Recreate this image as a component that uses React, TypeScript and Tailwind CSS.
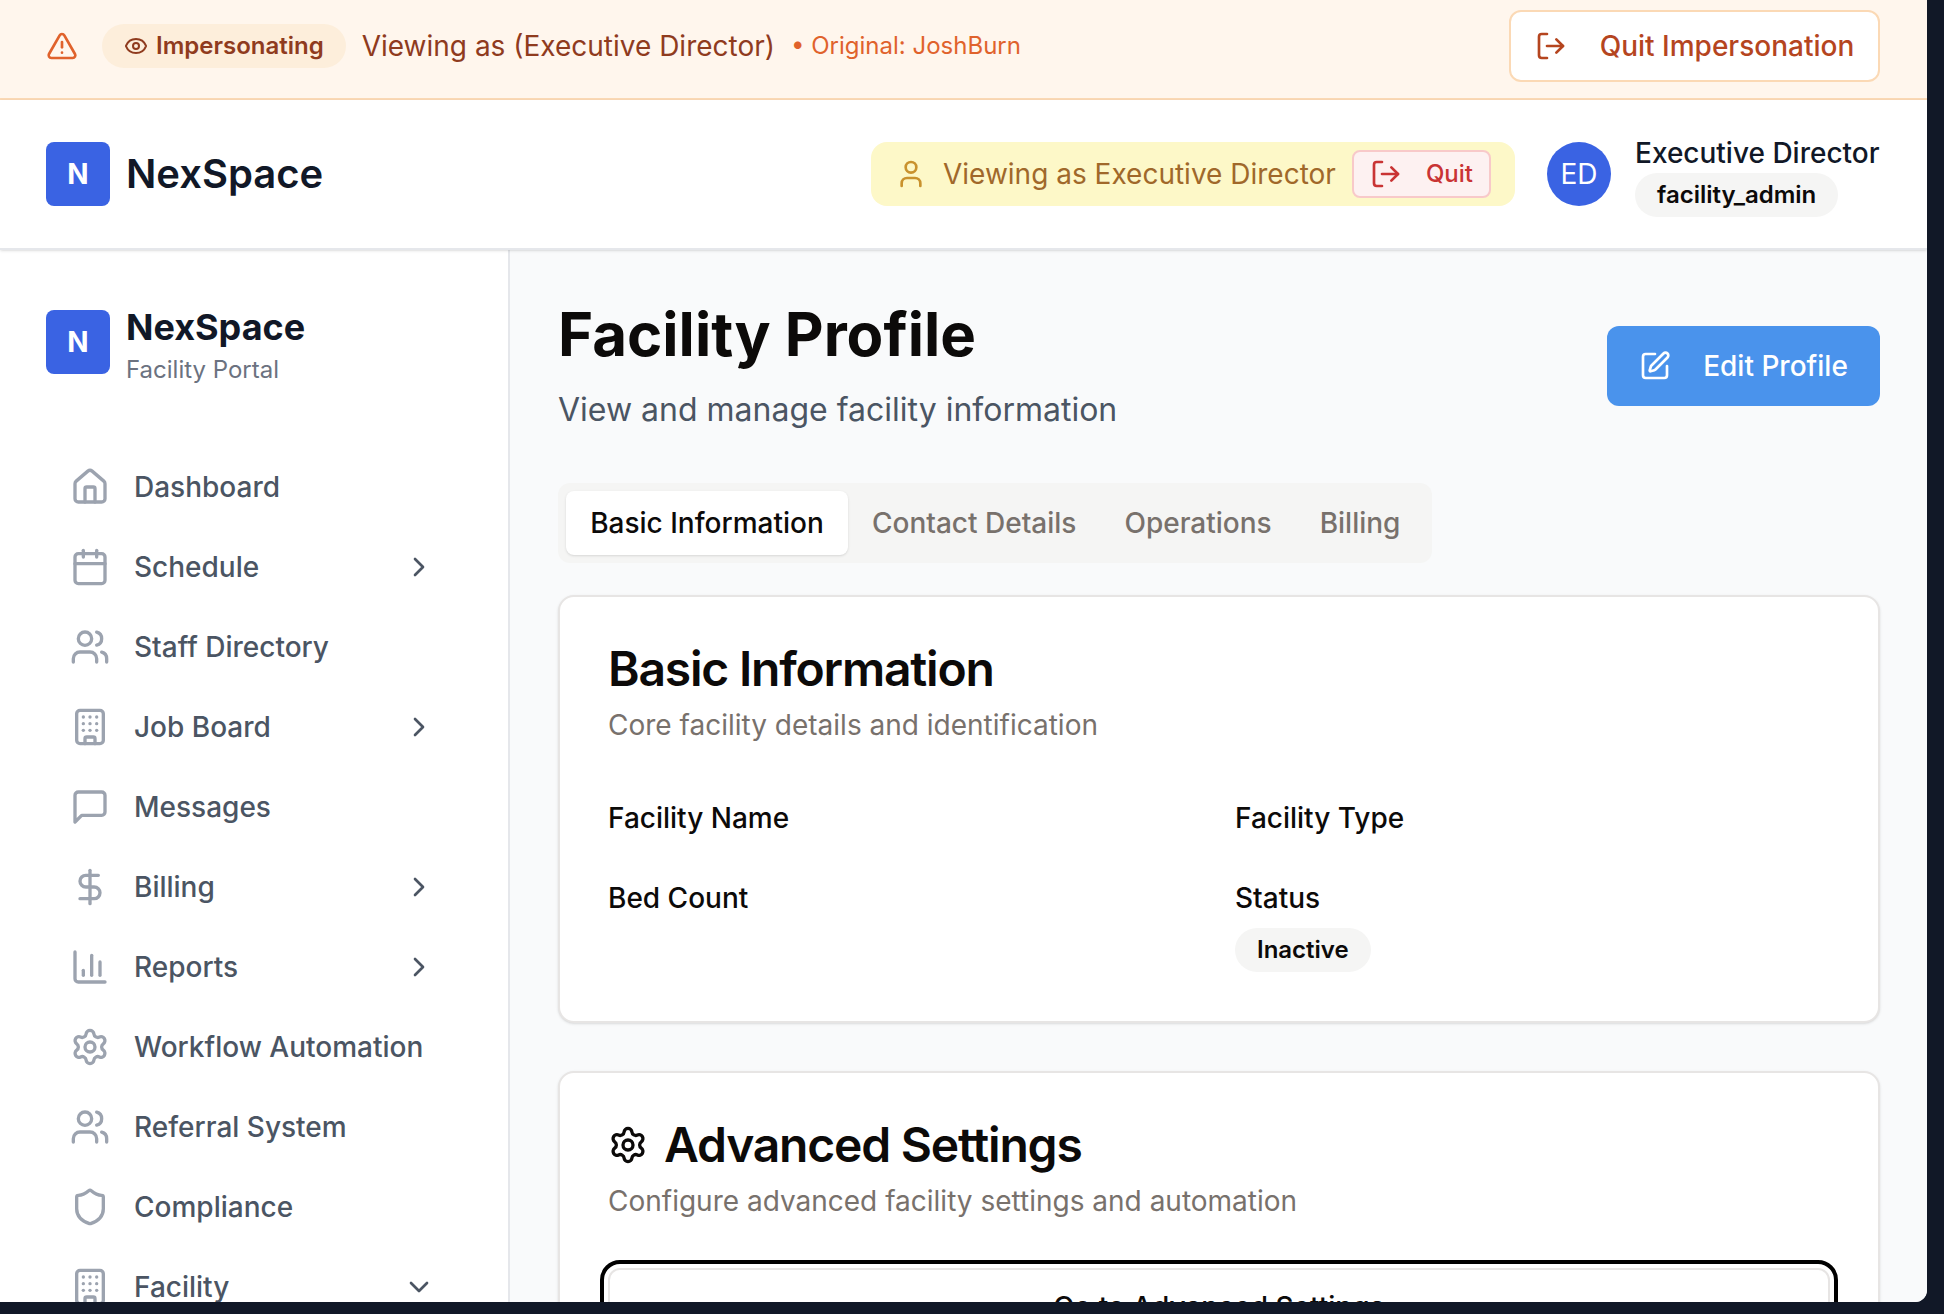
import { Building, Calendar, ChartColumn, ChevronDown, ChevronRight, DollarSign, Eye, House, LogOut, Settings, Shield, SquarePen, TriangleAlert, User, Users } from "lucide-react";

// the message icon in the picture has the older square tail
function MessageIcon({ size, strokeWidth, className }: { size: number; strokeWidth: number; className?: string }) {
  return (
    <svg width={size} height={size} viewBox="0 0 24 24" fill="none" stroke="currentColor" strokeWidth={strokeWidth} strokeLinecap="round" strokeLinejoin="round" className={className}>
      <path d="M21 15a2 2 0 0 1-2 2H7l-4 4V5a2 2 0 0 1 2-2h14a2 2 0 0 1 2 2z" />
    </svg>
  );
}

const navItems = [
  { label: "Dashboard", icon: House },
  { label: "Schedule", icon: Calendar, arrow: "right" },
  { label: "Staff Directory", icon: Users },
  { label: "Job Board", icon: Building, arrow: "right" },
  { label: "Messages", icon: MessageIcon },
  { label: "Billing", icon: DollarSign, arrow: "right" },
  { label: "Reports", icon: ChartColumn, arrow: "right" },
  { label: "Workflow Automation", icon: Settings },
  { label: "Referral System", icon: Users },
  { label: "Compliance", icon: Shield },
  { label: "Facility", icon: Building, arrow: "down" },
];

function ImpersonationBanner() {
  return (
    <div className="flex h-[100px] shrink-0 items-center justify-between border-b-2 border-[#fbd9b5] bg-[#fff6ed] pr-[47px] pb-[6px] pl-[46px]">
      <div className="flex items-center">
        <TriangleAlert size={32} strokeWidth={2} className="text-[#e0622c]" />
        <span className="ml-[24px] flex h-[44px] items-center gap-[8px] rounded-full bg-[#fdeedb] px-[22px] text-[24px] font-semibold text-[#8f3b1e]">
          <Eye size={24} strokeWidth={2} />
          Impersonating
        </span>
        <span className="ml-[16px] text-[28px] text-[#8f3b1e]">Viewing as (Executive Director)</span>
        <span className="ml-[16px] text-[24px] text-[#e0622c]">• Original: JoshBurn</span>
      </div>
      <button className="flex h-[72px] w-[371px] items-center justify-center gap-[33px] rounded-[12px] border-2 border-[#fbd9b5] bg-white text-[28px] font-medium text-[#b5451f]">
        <LogOut size={32} strokeWidth={2} />
        Quit Impersonation
      </button>
    </div>
  );
}

function TopHeader() {
  return (
    <header className="z-10 flex h-[150px] shrink-0 items-center justify-between border-b-2 border-[#e5e7eb] bg-white pr-[47px] pl-[46px] shadow-sm">
      <div className="flex items-center gap-[16px]">
        <div className="flex h-[64px] w-[64px] items-center justify-center rounded-[8px] bg-[#3a63e3] text-[28px] font-bold text-white">N</div>
        <span className="text-[40px] font-semibold text-[#111827]">NexSpace</span>
      </div>
      <div className="flex items-center">
        <div className="flex h-[64px] w-[644px] items-center rounded-[16px] bg-[#fdf8c8] pr-[24px] pl-[24px]">
          <User size={32} strokeWidth={2} className="text-[#c9922e]" />
          <span className="ml-[16px] text-[28px] text-[#a0682a]">Viewing as Executive Director</span>
          <button className="ml-auto flex h-[48px] w-[139px] items-center justify-between rounded-[8px] border-2 border-[#f8c9c9] bg-[#fdf1f1] pr-[16px] pl-[16px] text-[24px] font-medium text-[#c93434]">
            <LogOut size={32} strokeWidth={2} />
            Quit
          </button>
        </div>
        <div className="ml-[32px] flex h-[64px] w-[64px] items-center justify-center rounded-full bg-[#3a63e3] text-[28px] text-white">ED</div>
        <div className="ml-[24px] flex w-[245px] flex-col items-start pt-[2px]">
          <span className="text-[28px] leading-[40px] font-medium whitespace-nowrap text-[#111827]">Executive Director</span>
          <span className="flex h-[44px] items-center rounded-full bg-[#f5f5f4] px-[22px] text-[24px] font-semibold text-[#0c0a09]">facility_admin</span>
        </div>
      </div>
    </header>
  );
}

function Sidebar() {
  return (
    <aside className="w-[510px] shrink-0 border-r-2 border-[#e5e7eb] bg-white">
      <div className="flex items-start gap-[16px] pt-[60px] pl-[46px]">
        <div className="flex h-[64px] w-[64px] items-center justify-center rounded-[8px] bg-[#3a63e3] text-[28px] font-bold text-white">N</div>
        <div className="-mt-[5px] flex flex-col">
          <span className="text-[36px] leading-[44px] font-bold text-[#111827]">NexSpace</span>
          <span className="mt-[3px] text-[24px] leading-[36px] text-[#6b7280]">Facility Portal</span>
        </div>
      </div>
      <nav className="mt-[59px] flex flex-col pr-[73px] pl-[70px]">
        {navItems.map(({ label, icon: Icon, arrow }) => (
          <div key={label} className="flex h-[80px] shrink-0 items-center">
            <Icon size={40} strokeWidth={2} className="shrink-0 text-[#9ca3af]" />
            <span className="ml-[24px] text-[28px] font-medium whitespace-nowrap text-[#4b5563]">{label}</span>
            {arrow === "right" && <ChevronRight size={32} strokeWidth={2} className="ml-auto text-[#4b5563]" />}
            {arrow === "down" && <ChevronDown size={32} strokeWidth={2} className="ml-auto text-[#4b5563]" />}
          </div>
        ))}
      </nav>
    </aside>
  );
}

function Field({ label, children }: { label: string; children?: React.ReactNode }) {
  return (
    <div className="flex flex-col items-start">
      <span className="text-[28px] leading-[40px] font-medium text-[#0c0a09]">{label}</span>
      {children}
    </div>
  );
}

function MainContent() {
  return (
    <main className="min-w-0 flex-1 bg-[#f9fafb] pt-[48px] pr-[47px] pl-[48px]">
      <div className="flex items-start justify-between">
        <div>
          <h1 className="text-[60px] leading-[72px] font-bold text-[#0c0a09]">Facility Profile</h1>
          <p className="mt-[16px] text-[32px] leading-[48px] text-[#4b5563]">View and manage facility information</p>
        </div>
        <button className="mt-[28px] flex h-[80px] w-[273px] items-center justify-center gap-[32px] rounded-[12px] bg-[#4a93ec] text-[28px] font-medium text-white">
          <SquarePen size={32} strokeWidth={2} />
          Edit Profile
        </button>
      </div>

      <div className="mt-[49px] flex h-[80px] w-[874px] items-center rounded-[12px] bg-[#f5f5f4] px-[8px] text-[28px] font-medium whitespace-nowrap text-[#78716c]">
        <span className="flex h-[64px] w-[282px] shrink-0 items-center justify-center rounded-[8px] bg-white text-[#0c0a09] shadow-sm">Basic Information</span>
        <span className="flex h-[64px] shrink-0 items-center px-[24px]">Contact Details</span>
        <span className="flex h-[64px] shrink-0 items-center px-[24px]">Operations</span>
        <span className="flex h-[64px] shrink-0 items-center px-[24px]">Billing</span>
      </div>

      <section className="mt-[32px] h-[428px] rounded-[16px] border-2 border-[#e7e5e4] bg-white px-[48px] pt-[44px] shadow-sm">
        <h2 className="text-[48px] leading-[56px] font-semibold tracking-tight text-[#0c0a09]">Basic Information</h2>
        <p className="mt-[8px] text-[28px] leading-[40px] text-[#78716c]">Core facility details and identification</p>
        <div className="mt-[53px] grid grid-cols-2 gap-x-[32px] gap-y-[40px]">
          <Field label="Facility Name" />
          <Field label="Facility Type" />
          <Field label="Bed Count" />
          <Field label="Status">
            <span className="mt-[10px] flex h-[44px] items-center rounded-full bg-[#f5f5f4] px-[22px] text-[24px] font-semibold text-[#0c0a09]">Inactive</span>
          </Field>
        </div>
      </section>

      <section className="mt-[48px] rounded-[16px] border-2 border-[#e7e5e4] bg-white px-[48px] pt-[44px] pb-[48px] shadow-sm">
        <h2 className="flex items-center gap-[16px] text-[48px] leading-[56px] font-semibold tracking-tight text-[#0c0a09]">
          <Settings size={40} strokeWidth={2} />
          Advanced Settings
        </h2>
        <p className="mt-[8px] text-[28px] leading-[40px] text-[#78716c]">Configure advanced facility settings and automation</p>
        <button className="mt-[47px] flex h-[80px] w-full items-start justify-center rounded-[12px] border-2 border-[#e7e5e4] bg-white pt-[16px] text-[28px] font-medium text-[#0c0a09] outline-4 outline-offset-4 outline-black">
          Go to Advanced Settings
        </button>
      </section>
    </main>
  );
}

export default function App() {
  return (
    <div className="h-[1314px] w-[1944px] overflow-hidden bg-[#111827] [font-family:Inter,'Noto_Sans',sans-serif]">
      <div className="flex h-[1302px] w-[1927px] flex-col overflow-hidden rounded-br-[12px] bg-white">
        <ImpersonationBanner />
        <TopHeader />
        <div className="flex min-h-0 flex-1">
          <Sidebar />
          <MainContent />
        </div>
      </div>
    </div>
  );
}
